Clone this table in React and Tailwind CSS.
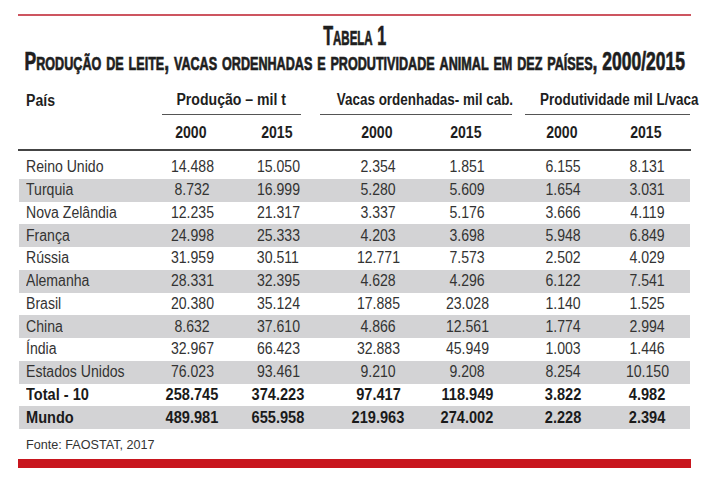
const rows = [
  ['Reino Unido', '14.488', '15.050', '2.354', '1.851', '6.155', '8.131'],
  ['Turquia', '8.732', '16.999', '5.280', '5.609', '1.654', '3.031'],
  ['Nova Zelândia', '12.235', '21.317', '3.337', '5.176', '3.666', '4.119'],
  ['França', '24.998', '25.333', '4.203', '3.698', '5.948', '6.849'],
  ['Rússia', '31.959', '30.511', '12.771', '7.573', '2.502', '4.029'],
  ['Alemanha', '28.331', '32.395', '4.628', '4.296', '6.122', '7.541'],
  ['Brasil', '20.380', '35.124', '17.885', '23.028', '1.140', '1.525'],
  ['China', '8.632', '37.610', '4.866', '12.561', '1.774', '2.994'],
  ['Índia', '32.967', '66.423', '32.883', '45.949', '1.003', '1.446'],
  ['Estados Unidos', '76.023', '93.461', '9.210', '9.208', '8.254', '10.150'],
]

const totals = [
  ['Total - 10', '258.745', '374.223', '97.417', '118.949', '3.822', '4.982'],
  ['Mundo', '489.981', '655.958', '219.963', '274.002', '2.228', '2.394'],
]

// column boxes: first is the country, the rest are centred on the figures
const cols = [
  'w-[133px] pl-[7px] text-left',
  'w-[80px] text-center',
  'ml-[6px] w-[80px] text-center',
  'ml-[20px] w-[80px] text-center',
  'ml-[9px] w-[80px] text-center',
  'ml-[16px] w-[80px] text-center',
  'ml-[4px] w-[80px] text-center',
]

// no narrow face is installed, so squeeze the sans horizontally
function Narrow({ children, bold, left, tight }) {
  const scale = tight ? 'scale-x-[0.84]' : bold ? 'scale-x-[0.91]' : 'scale-x-[0.88]'
  return (
    <span className={`inline-block whitespace-nowrap ${scale} ${left ? 'origin-left' : 'origin-center'}`}>
      {children}
    </span>
  )
}

function Row({ cells, shaded, bold }) {
  return (
    <div
      className={`flex h-[22.75px] items-center ${shaded ? 'bg-[#d3d3d5]' : ''} ${
        bold ? 'font-bold text-[#1a1a1a]' : 'text-[#333]'
      }`}
    >
      {cells.map((c, i) => (
        <div key={i} className={cols[i]}>
          <Narrow bold={bold} left={i === 0}>
            {c}
          </Narrow>
        </div>
      ))}
    </div>
  )
}

export default function App() {
  return (
    <div className="w-[709px] h-[490px] overflow-hidden bg-white pt-[14px] font-['Liberation_Sans',Arial,sans-serif] text-[16px] leading-none">
      <div className="mx-[18px]">
        <div className="h-[2px] bg-[#cd5560]" />

        <div className="mt-[8px] flex flex-col items-center text-[#1e1e1e] font-bold [font-variant:small-caps] [-webkit-text-stroke:0.7px_#1e1e1e]">
          <div className="h-[24px] text-[28px] leading-[24px] whitespace-nowrap scale-x-[0.575]">Tabela 1</div>
          <div className="mt-[2px] h-[22px] text-[25px] leading-[22px] whitespace-nowrap scale-x-[0.7]">
            Produção de leite, vacas ordenhadas e produtividade animal em dez países, 2000/2015
          </div>
        </div>

        <div className="mt-[20px] flex items-end font-bold text-[#1e1e1e]">
          <div className="w-[144px] pl-[8px] pb-[6px]">
            <Narrow left>País</Narrow>
          </div>
          <div className="w-[139px] border-b border-[#555] pb-[6px] text-center">
            <Narrow>Produção – mil t</Narrow>
          </div>
          <div className="ml-[19px] w-[192px] border-b border-[#555] pb-[6px] text-center">
            <Narrow tight>Vacas ordenhadas- mil cab.</Narrow>
          </div>
          <div className="ml-[13px] w-[165px] border-b border-[#555] pb-[6px] text-center">
            <Narrow tight>Produtividade mil L/vaca</Narrow>
          </div>
        </div>

        <div className="mt-[6px] flex h-[23px] items-center font-bold text-[#1e1e1e]">
          {['', '2000', '2015', '2000', '2015', '2000', '2015'].map((c, i) => (
            <div key={i} className={cols[i]}>
              <Narrow>{c}</Narrow>
            </div>
          ))}
        </div>
        <div className="mt-[5px] h-[2px] bg-[#444]" />

        <div className="mt-[5px] mx-px">
          {rows.map((r, i) => (
            <Row key={r[0]} cells={r} shaded={i % 2 === 1} />
          ))}
          {totals.map((r, i) => (
            <Row key={r[0]} cells={r} shaded={i === 1} bold />
          ))}
        </div>

        <div className="mt-[9px] pl-[8px] h-[13px] text-[13px] text-[#333]">
          <span className="inline-block origin-left scale-x-[0.97]">Fonte: FAOSTAT, 2017</span>
        </div>
        <div className="mt-[8px] h-[9px] bg-[#c8161e]" />
      </div>
    </div>
  )
}
